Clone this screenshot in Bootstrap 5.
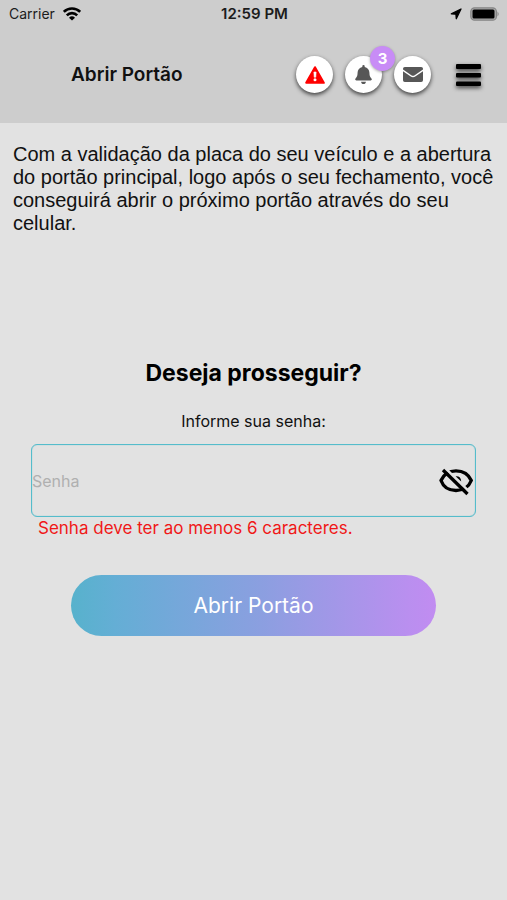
<!DOCTYPE html>
<html lang="pt-BR">
<head>
<meta charset="utf-8">
<meta name="viewport" content="width=device-width, initial-scale=1">
<title>Abrir Portão</title>
<link href="https://cdn.jsdelivr.net/npm/bootstrap@5.3.0/dist/css/bootstrap.min.css" rel="stylesheet">
<style>
body { font-family: Inter, "Liberation Sans", sans-serif; background: #e2e2e2; color: #111; }
svg { display: block; }
.top-area { background: #cdcdcd; }
.status-bar { height: 27px; font-size: 14px; line-height: 27px; padding: 0 7px 0 9px; color: #1c1c1c; }
.status-side { flex: 1 1 0; }
.clock { font-size: 15px; }
.app-bar { height: 96px; padding: 0 25px 1px 71px; }
.app-title { font-size: 19px; line-height: 24px; font-weight: 600; }
.round-btn { width: 37px; height: 37px; background: #fff; box-shadow: 0 2px 4px rgba(0,0,0,.7); color: #575757; }
.round-set { gap: 12px; }
.count { top: -10px; right: -13px; width: 25px; height: 25px; background: #c88cf6; color: #fff; font-size: 15px; line-height: 25px; font-weight: 700; box-shadow: 0 1px 3px rgba(0,0,0,.35); }
.menu-btn { margin-left: 24px; filter: drop-shadow(0 2px 2px rgba(0,0,0,.7)); }
.intro { padding: 20px 10px 0 13px; font-family: "Liberation Sans", sans-serif; font-size: 20px; line-height: 23px; margin-bottom: 124px; }
.question { font-size: 23px; line-height: 28px; font-weight: 700; margin-bottom: 24px; color: #000; }
.form-area { padding: 0 31px; }
.ask { font-size: 16px; line-height: 20px; margin-bottom: 13px; }
.pass-box { height: 73px; border: 1px solid #55bccb; box-shadow: inset 0 0 1px #55bccb; border-radius: 6px; }
.pass-box input { font-size: 16px; line-height: 20px; color: #111; outline: 0; }
.pass-box input::placeholder { color: #b0b0b0; opacity: 1; }
.error-text { font-size: 17px; line-height: 22px; color: #f01818; padding-left: 7px; margin-bottom: 36px; }
.open-btn { margin: 0 40px; height: 61px; font-size: 21px; line-height: 26px; color: #fff; background: linear-gradient(90deg, #57b2cc 0%, #64aed5 12%, #8b9fe0 52%, #b98fef 92%, #c18cf1 100%); }
</style>
<script src="https://cdn.jsdelivr.net/npm/bootstrap@5.3.0/dist/js/bootstrap.bundle.min.js"></script>
</head>
<body>
<header class="top-area">
  <div class="status-bar d-flex align-items-center">
    <div class="status-side d-flex align-items-center gap-2">
      <span>Carrier</span>
      <svg width="18" height="14" viewBox="0 0 18 14" fill="none" stroke="#000" stroke-width="2.6"><path d="M.8 4.900a11.600 11.600 0 0 1 16.400 0M3.800 8.300a7.400 7.400 0 0 1 10.400 0"/><path d="M9 13.500L6 10.700a4.300 4.300 0 0 1 6 0z" fill="#000" stroke="none"/></svg>
    </div>
    <span class="clock fw-semibold">12:59 PM</span>
    <div class="status-side d-flex align-items-center justify-content-end gap-2">
      <svg width="12" height="12" viewBox="0 0 12 12"><path d="M11 1L6.300 10.700 5.900 6.200 1.300 5.900z" fill="#000" stroke="#000" stroke-width="1.300" stroke-linejoin="round"/></svg>
      <svg width="30" height="14" viewBox="0 0 30 14"><rect x=".8" y=".8" width="25.600" height="12.400" rx="3.800" fill="#aaa" stroke="#858585" stroke-width="1.200"/><rect x="2.500" y="2.500" width="22" height="9" rx="1.500" fill="#000"/><path d="M27.500 4.500q2.400 2.500 0 5z" fill="#858585"/></svg>
    </div>
  </div>
  <nav class="app-bar d-flex align-items-center" aria-label="Principal">
    <h1 class="app-title mb-0 me-auto">Abrir Portão</h1>
    <div class="round-set d-flex">
      <button type="button" class="round-btn btn rounded-circle border-0 p-0 d-flex align-items-center justify-content-center" aria-label="Alertas">
        <svg width="20" height="18" viewBox="0 0 20 18"><path d="M10 1.200L18.800 16.800H1.200z" fill="#f00" stroke="#f00" stroke-width="2" stroke-linejoin="round"/><path d="M8.900 6h2.200l-.3 5.200H9.200z" fill="#fff" stroke="#fff" stroke-width=".6"/><circle cx="10" cy="13.800" r="1.500" fill="#fff"/></svg>
      </button>
      <button type="button" class="round-btn btn rounded-circle border-0 p-0 position-relative d-flex align-items-center justify-content-center" aria-label="Notificações">
        <svg width="17" height="19" viewBox="0 0 448 512" fill="currentColor"><path d="M224 512c35.300 0 64-28.700 64-64H160c0 35.300 28.600 64 64 64zm215.400-149.700c-19.300-20.800-55.500-52-55.500-154.300 0-77.700-54.500-139.900-127.900-155.200V32a32 32 0 1 0-64 0v20.800C118.600 68.100 64.100 130.300 64.100 208c0 102.300-36.200 133.500-55.500 154.300-6 6.400-8.700 14.100-8.600 21.700.1 16.400 13 32 32.100 32h383.800c19.100 0 32-15.600 32.100-32 0-7.600-2.600-15.300-8.600-21.700z"/></svg>
        <span class="count position-absolute rounded-circle">3</span>
      </button>
      <button type="button" class="round-btn btn rounded-circle border-0 p-0 d-flex align-items-center justify-content-center" aria-label="Mensagens">
        <svg width="20" height="15" viewBox="0 0 20 15" fill="currentColor"><path d="M1.800 0h16.400Q20 0 20 1.800v.8l-8.300 5.600q-1.700 1.100-3.400 0L0 2.600v-.8Q0 0 1.800 0z"/><path d="M0 4.300l7.400 5q2.600 1.800 5.200 0L20 4.300v8.900q0 1.800-1.800 1.800H1.800Q0 15 0 13.200z"/></svg>
      </button>
    </div>
    <button type="button" class="menu-btn btn border-0 p-0" aria-label="Menu">
      <svg width="27" height="24" viewBox="0 0 27 24"><rect x="1" y="1" width="25" height="5" rx="1"/><rect x="1" y="10" width="25" height="4.500" rx="1"/><rect x="1" y="18.500" width="25" height="4.500" rx="1"/></svg>
    </button>
  </nav>
</header>
<main>
  <p class="intro">Com a validação da placa do seu veículo e a abertura do portão principal, logo após o seu fechamento, você conseguirá abrir o próximo portão através do seu celular.</p>
  <form class="form-area d-flex flex-column">
    <h2 class="question text-center">Deseja prosseguir?</h2>
    <label class="ask text-center" for="senha">Informe sua senha:</label>
    <div class="pass-box d-flex align-items-center">
      <input id="senha" type="password" class="flex-grow-1 h-100 border-0 bg-transparent p-0" placeholder="Senha" aria-describedby="senha-erro">
      <button type="button" class="btn border-0 p-0" aria-label="Mostrar senha">
        <svg width="38" height="36" viewBox="0 0 38 36" fill="none"><path d="M4 17.500C7 10.500 12.500 7.800 19 7.800s12.500 3.200 15.300 9.700C31.500 24.500 25.500 27.500 19 27.500S6.500 24.500 4 17.500z" stroke="#000" stroke-width="3.300"/><path d="M9 6L33 29.500" stroke="#e2e2e2" stroke-width="2.600"/><path d="M18.600 13.300q5.400-.4 5.600 5.200z" fill="#000"/><path d="M6 7L30.500 31" stroke="#000" stroke-width="3.300"/></svg>
      </button>
    </div>
    <p id="senha-erro" class="error-text">Senha deve ter ao menos 6 caracteres.</p>
    <button type="submit" class="open-btn btn border-0 rounded-pill">Abrir Portão</button>
  </form>
</main>
</body>
</html>
